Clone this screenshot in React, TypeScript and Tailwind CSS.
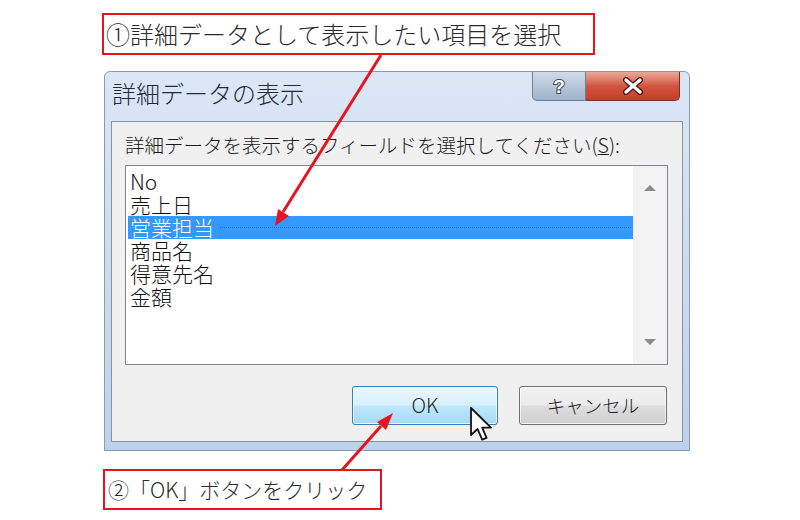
import React from "react";

const fields = ["No", "売上日", "営業担当", "商品名", "得意先名", "金額"];
const selected = "営業担当";

const Callout = ({ text, className }: { text: string; className: string }) => (
  <div className={`flex items-center border-2 border-[#e5141f] bg-white pl-[2px] text-[#2a2a2a] ${className}`}>
    {text}
  </div>
);

const Cursor = () => (
  <svg width="28" height="36" viewBox="0 0 14 18" className="absolute left-[116px] top-[19px]">
    <path
      d="M1 1 L1 14.5 L4.3 11.5 L6.6 16.8 L8.8 15.9 L6.6 10.8 L11 10.8 Z"
      fill="#fff"
      stroke="#111"
      strokeWidth="0.9"
      strokeLinejoin="round"
    />
  </svg>
);

export default function App() {
  return (
    <div className="relative h-[520px] w-[800px] overflow-hidden bg-white font-['Noto_Sans_CJK_JP',sans-serif] font-light">
      {/* step 1 */}
      <Callout
        text="①詳細データとして表示したい項目を選択"
        className="ml-[102px] mt-[13px] h-[42px] w-[493px] text-[24px] leading-none"
      />

      {/* dialog */}
      <div className="ml-[104px] mt-[16px] flex h-[380px] w-[586px] flex-col rounded-t-[6px] border border-[#8a9bb0] bg-gradient-to-b from-[#dbe7f5] via-[#cbdcef] to-[#bcd2ec] px-[6px] pb-[8px]">
        <div className="flex h-[49px] items-start">
          <div className="mt-[9px] pl-[1px] text-[24px] leading-none text-[#1d2b3d]">詳細データの表示</div>
          <div className="ml-auto mr-[3px] flex">
            <div className="flex h-[29px] w-[54px] items-center justify-center rounded-bl-[5px] border border-t-0 border-[#6f7f95] bg-gradient-to-b from-[#cfdbe8] to-[#9fb3ca]">
              <svg width="20" height="22" viewBox="0 0 20 22">
                <text
                  x="10"
                  y="18"
                  textAnchor="middle"
                  fontSize="19"
                  fontWeight="bold"
                  fontFamily="Liberation Sans, sans-serif"
                  fill="#fff"
                  stroke="#3d4a5c"
                  strokeWidth="2"
                  paintOrder="stroke"
                >
                  ?
                </text>
              </svg>
            </div>
            <div className="flex h-[29px] w-[94px] items-center justify-center rounded-br-[5px] border border-l-0 border-t-0 border-[#7a2e25] bg-gradient-to-b from-[#e9a898] via-[#d2553f] to-[#c73e2a]">
              <svg width="24" height="18" viewBox="0 0 24 18">
                <path d="M5 3 L19 15 M19 3 L5 15" stroke="#4a1a14" strokeWidth="6" strokeLinecap="round" />
                <path d="M5 3 L19 15 M19 3 L5 15" stroke="#fff" strokeWidth="3.4" strokeLinecap="round" />
              </svg>
            </div>
          </div>
        </div>

        <div className="relative flex flex-1 flex-col border border-[#8493a5] bg-[#f0f0f0] pl-[13px] pr-[14px]">
          <div className="mt-[13px] text-[19.5px] leading-none text-[#1a1a1a]">
            詳細データを表示するフィールドを選択してください(<span className="underline">S</span>):
          </div>

          <div className="mt-[10px] flex h-[200px] border border-[#828790] bg-white">
            <div className="flex flex-1 flex-col pl-[2px] pt-[4px]">
              {fields.map((f) => (
                <div
                  key={f}
                  className={`relative flex h-[23px] items-center pl-[2px] text-[21px] leading-[23px] ${
                    f === selected ? "bg-[#3399ff] text-white" : "text-[#111]"
                  }`}
                >
                  {f}
                  {f === selected && (
                    <span className="absolute left-[92px] right-[2px] top-[11px] border-t border-dotted border-[#1a6fd0]" />
                  )}
                </div>
              ))}
            </div>
            <div className="flex w-[34px] flex-col items-center justify-between bg-[#f3f3f3] py-[18px]">
              <svg width="12" height="7" viewBox="0 0 12 7">
                <path d="M0 7 L6 1 L12 7 Z" fill="#8b8b8b" />
              </svg>
              <svg width="12" height="7" viewBox="0 0 12 7">
                <path d="M0 0 L6 6 L12 0 Z" fill="#8b8b8b" />
              </svg>
            </div>
          </div>

          <div className="mt-[21px] flex justify-end gap-[21px] pr-[1px]">
            <div className="relative flex h-[39px] w-[146px] items-center justify-center rounded-[3px] border border-[#3c7fb1] bg-[linear-gradient(to_bottom,#eaf6fd_0%,#d9f0fc_48%,#bee6fd_52%,#a7d9f5_100%)] text-[20px] leading-none text-[#222] shadow-[inset_0_0_0_1px_rgba(255,255,255,0.7)]">
              OK
              <Cursor />
            </div>
            <div className="flex h-[39px] w-[148px] items-center justify-center rounded-[3px] border border-[#707070] bg-[linear-gradient(to_bottom,#f2f2f2_0%,#ebebeb_48%,#dddddd_52%,#cfcfcf_100%)] text-[18.5px] leading-none text-[#222] shadow-[inset_0_0_0_1px_rgba(255,255,255,0.7)]">
              キャンセル
            </div>
          </div>
        </div>
      </div>

      {/* step 2 */}
      <Callout
        text="②「OK」ボタンをクリック"
        className="ml-[103px] mt-[18px] h-[41px] w-[279px] pl-[3px] text-[21px] leading-none"
      />

      {/* leader arrows */}
      <svg className="pointer-events-none absolute left-0 top-0" width="800" height="520">
        <line x1="381" y1="55" x2="283" y2="212" stroke="#e5141f" strokeWidth="3" />
        <polygon points="275,226 289,216 278,209" fill="#e5141f" />
        <line x1="342" y1="470" x2="381" y2="426" stroke="#e5141f" strokeWidth="3" />
        <polygon points="393,413 386,430 377,422" fill="#e5141f" />
      </svg>
    </div>
  );
}
